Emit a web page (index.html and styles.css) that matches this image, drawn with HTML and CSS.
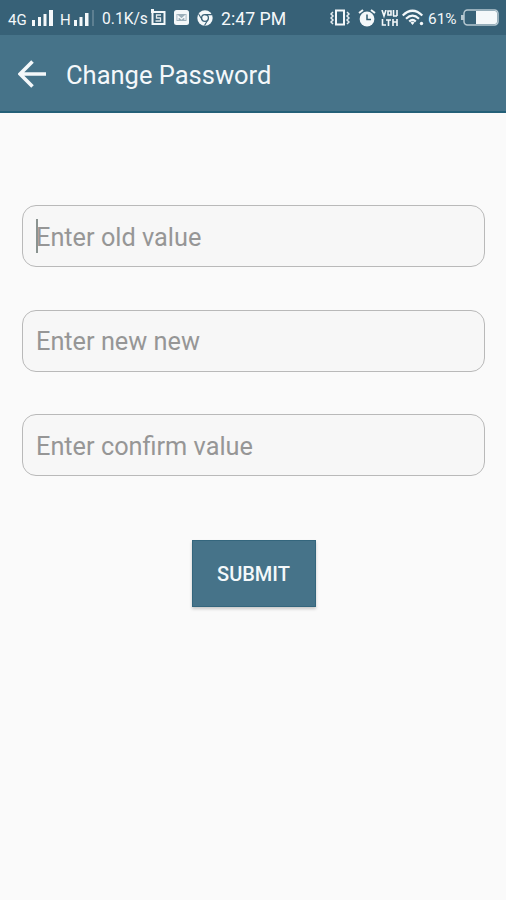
FILE: index.html
```
<!DOCTYPE html>
<html lang="en">
<head>
<meta charset="utf-8">
<title>Change Password</title>
<link rel="stylesheet" href="styles.css">
</head>
<body>
<header>
  <div class="status">
    <span class="net">4G</span>
    <svg class="signal" width="22" height="17" viewBox="0 0 22 17"><path d="M0 11h3v6H0zM6 8h3v9H6zM11.500 5h3v12h-3zM17 1h4v16h-4z"/></svg>
    <span class="net second">H</span>
    <svg class="signal" width="21" height="17" viewBox="0 0 21 17"><path d="M0 11h3v6H0zM5.500 8h3v9h-3zM11 4h3.500v13H11z"/><path opacity=".2" d="M18 1h2v16h-2z"/></svg>
    <span class="speed">0.1K/s</span>
    <svg class="sync" width="15" height="17" viewBox="0 0 15 17"><path fill="none" stroke="#f4f8fa" stroke-width="2" d="M1.500 3h12v12h-12z"/><path d="M0 0h3v4H0z"/><path fill="none" stroke="#e3eaee" stroke-width="1.300" d="M10 6H5.500v3H9.500v3H4.500"/></svg>
    <svg class="mail" width="15" height="15" viewBox="0 0 15 15"><rect width="15" height="15" rx="2.500"/><path fill="#9bafba" d="M2.500 4h10v7h-10z"/><path fill="none" stroke="#f4f8fa" stroke-width="1.300" d="M4 10V6l3.500 3L11 6v4"/></svg>
    <svg class="browser" width="16" height="16" viewBox="0 0 16 16"><circle cx="8" cy="8" r="7.700"/><circle cx="8" cy="8" r="3.400" fill="none" stroke="#3a6278" stroke-width="1.300"/><circle cx="8" cy="8" r="1.700"/><path fill="none" stroke="#3a6278" stroke-width="1.100" d="M8 4.600h7M5.100 9.700 1.600 4M10.900 9.700 7.500 15.500"/></svg>
    <time>2:47 PM</time>
    <svg class="vibrate" width="20" height="17" viewBox="0 0 20 17"><path fill="none" stroke="#f4f8fa" stroke-width="2" d="M6 1.500h8v14H6z"/><path fill="none" stroke="#e3eaee" stroke-width="1.500" d="M3 3 1 5l2 2-2 2 2 2-2 2 2 2M17 3l2 2-2 2 2 2-2 2 2 2-2 2"/></svg>
    <svg class="alarm" width="18" height="18" viewBox="0 0 18 18"><circle cx="9" cy="10" r="7.400"/><path fill="none" stroke="#f4f8fa" stroke-width="2" d="m1 4 4-3M17 4l-4-3"/><path fill="none" stroke="#315b70" stroke-width="1.500" d="M9 5.500v5h4"/></svg>
    <svg class="volte" width="17" height="16" viewBox="0 0 17 16"><path fill="none" stroke="#f4f8fa" stroke-width="1.600" d="m1 0 2 6 2-6M7 1h3v4H7zM12.500 0v6M16 0v6M12 6h4M1.500 9v6H5M5 10h5M7.500 10v6M12 9v7M16 9v7M12 12h4"/></svg>
    <svg class="wifi" width="23" height="17" viewBox="0 0 23 17"><path fill="none" stroke="#f4f8fa" stroke-width="2.200" d="M.7 6.500Q10.500-3 20.300 6.500M4 9.700q6.500-6 13 0M7.200 12.500q3.300-3 6.600 0"/><path d="m8.500 13.500 2 2.500 2-2.500q-2-1.500-4 0z"/><circle cx="19.500" cy="14.500" r="1.700"/></svg>
    <span class="percent">61%</span>
    <svg class="battery" width="38" height="17" viewBox="0 0 38 17"><rect x="3" y="1" width="34" height="15" rx="3.500" fill="none" stroke="#b7c8d1" stroke-width="1.500"/><path fill="#b7c8d1" d="M0 6h3v5H0z"/><path d="M15 2h19q2 0 2 2v9q0 2-2 2H15z"/></svg>
  </div>
  <div class="appbar">
    <svg class="back" width="29" height="28" viewBox="0 0 29 28"><path d="M14.500 1.500 2 14l12.500 12.500M2.500 14H28"/></svg>
    <h1>Change Password</h1>
  </div>
</header>
<main>
  <div class="field focused">Enter old value</div>
  <div class="field">Enter new new</div>
  <div class="field">Enter confirm value</div>
  <button class="submit">SUBMIT</button>
</main>
</body>
</html>
```
FILE: styles.css
```
* { box-sizing: border-box; }
body { margin: 0; min-height: 900px; background: #fafafa; font-family: Roboto, "Liberation Sans", sans-serif; }
header { height: 113px; background: #467389; border-bottom: 2px solid #246078; color: #f4f8fa; }
.status { display: flex; align-items: center; height: 35px; padding: 0 0 0 8px; background: #376177; font-size: 16px; line-height: 34px; white-space: nowrap; }
.status > * { flex: none; }
.status svg { fill: #f4f8fa; }
.net { width: 24px; padding-top: 4px; font-size: 15px; }
.second { width: 14px; margin-left: 6px; }
.status .signal { margin-bottom: 1px; }
.speed { width: 50px; margin-left: 7px; padding-top: 2px; font-size: 15.6px; }
.sync { margin-left: -1px; }
.mail { margin-left: 8px; }
.browser { margin-left: 8px; }
.status time { width: 70px; margin-left: 8px; padding-top: 2px; font-size: 17.7px; }
.vibrate { margin-left: 39px; }
.alarm { margin-left: 8px; }
.volte { margin-left: 5px; }
.wifi { margin-left: 4px; }
.percent { width: 33px; margin-left: 3px; padding-top: 2px; font-size: 15.4px; }
.appbar { display: flex; align-items: center; height: 77px; padding-left: 18px; }
.back { fill: none; stroke: #f4f8fa; stroke-width: 3.6; }
h1 { margin: 3px 0 0 19px; font-size: 25.5px; line-height: 32px; font-weight: 400; }
main { display: flex; flex-direction: column; padding: 92px 21px 0 22px; }
.field { display: flex; align-items: center; height: 62px; margin-bottom: 42.5px; padding: 2px 0 0 13px; border: 1.5px solid #b9b9b9; border-radius: 14px; background: #f7f7f7; color: #969696; font-size: 25.3px; }
.focused::before { content: ""; width: 2px; height: 34px; margin: -3px -2px 0 0; background: #8a9390; }
.submit { align-self: center; width: 124px; height: 67px; margin: 21px 0 0 0; padding: 2px 0 0; border: 1px solid #34667d; background: #467389; box-shadow: 0 2px 3px #0003; color: #f4f8fa; font: 500 20px Roboto, sans-serif; }
```
